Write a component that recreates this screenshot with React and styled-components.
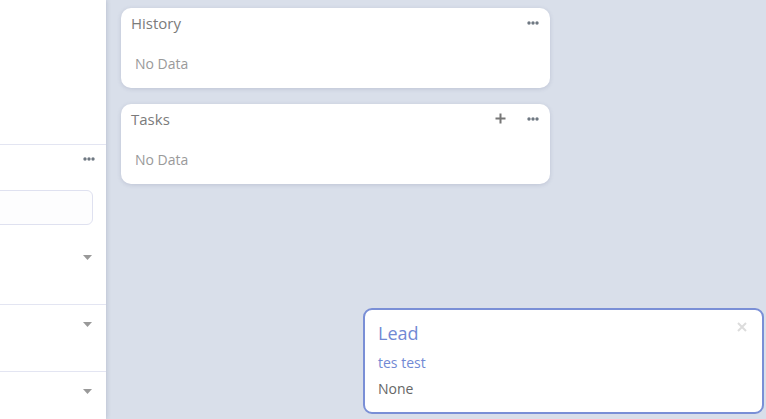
import React from "react";
import styled, { createGlobalStyle } from "styled-components";

const GlobalStyle = createGlobalStyle`
  html, body {
    margin: 0;
    padding: 0;
    height: 100%;
    overflow: hidden;
  }
  body {
    font-family: "Open Sans", "Liberation Sans", sans-serif;
    background: #d9dfea;
  }
  #root {
    height: 100%;
  }
`;

function Dots() {
  return (
    <svg width="12" height="4" viewBox="0 0 12 4">
      <circle cx="2" cy="2" r="1.7" fill="#6f7882" />
      <circle cx="6" cy="2" r="1.7" fill="#6f7882" />
      <circle cx="10" cy="2" r="1.7" fill="#6f7882" />
    </svg>
  );
}

function Plus() {
  return (
    <svg width="11" height="11" viewBox="0 0 11 11">
      <path d="M5.5 0.5v10M0.5 5.5h10" stroke="#777" strokeWidth="2" />
    </svg>
  );
}

function Caret() {
  return (
    <svg width="9" height="5" viewBox="0 0 9 5">
      <path d="M0 0h9L4.5 5z" fill="#999" />
    </svg>
  );
}

function Close() {
  return (
    <svg width="10" height="10" viewBox="0 0 10 10">
      <path d="M1 1l8 8M9 1l-8 8" stroke="#dcdcdc" strokeWidth="2" />
    </svg>
  );
}

export default function App() {
  return (
    <>
      <GlobalStyle />
      <Page>
        <Sidebar>
          <SideTop />
          <SideHeader>
            <Dots />
          </SideHeader>
          <SearchBox />
          <SelectRow $first>
            <Caret />
          </SelectRow>
          <SelectRow>
            <Caret />
          </SelectRow>
          <SelectRow>
            <Caret />
          </SelectRow>
        </Sidebar>
        <Main>
          <Card>
            <CardHead>
              <CardTitle>History</CardTitle>
              <Actions>
                <Dots />
              </Actions>
            </CardHead>
            <Empty>No Data</Empty>
          </Card>
          <Card>
            <CardHead>
              <CardTitle>Tasks</CardTitle>
              <Actions>
                <Plus />
                <Dots />
              </Actions>
            </CardHead>
            <Empty>No Data</Empty>
          </Card>
        </Main>
        <Toast>
          <CloseBtn>
            <Close />
          </CloseBtn>
          <ToastTitle>Lead</ToastTitle>
          <ToastLink>tes test</ToastLink>
          <ToastText>None</ToastText>
        </Toast>
      </Page>
    </>
  );
}

const Page = styled.div`
  position: relative;
  display: flex;
  height: 100%;
`;

const Sidebar = styled.div`
  width: 106px;
  flex-shrink: 0;
  background: #fff;
  box-shadow: 1px 0 4px rgba(60, 70, 110, 0.18);
  display: flex;
  flex-direction: column;
  overflow: hidden;
  z-index: 1;

  & > * {
    flex-shrink: 0;
  }
`;

const SideTop = styled.div`
  height: 144px;
  border-bottom: 1px solid #e3e5f2;
`;

const SideHeader = styled.div`
  height: 28px;
  display: flex;
  justify-content: flex-end;
  align-items: center;
  padding-right: 11px;
`;

const SearchBox = styled.div`
  margin: 17px 13px 0 -10px;
  height: 33px;
  border: 1px solid #dfe1f0;
  border-radius: 6px;
  background: #fdfdfe;
`;

const SelectRow = styled.div`
  height: ${({ $first }) => ($first ? "80px" : "67px")};
  border-bottom: 1px solid #e3e5f2;
  display: flex;
  justify-content: flex-end;
  align-items: flex-start;
  padding: ${({ $first }) => ($first ? "30px" : "17px")} 14px 0 0;
  box-sizing: border-box;
`;

const Main = styled.div`
  flex: 1;
  padding: 8px 15px;
  display: flex;
  flex-direction: column;
  gap: 16px;
`;

const Card = styled.div`
  width: 429px;
  height: 80px;
  box-sizing: border-box;
  background: #fff;
  border-radius: 10px;
  box-shadow: 0 1px 4px rgba(70, 80, 120, 0.18);
  padding: 5px 11px 0 10px;
`;

const CardHead = styled.div`
  display: flex;
  justify-content: space-between;
  align-items: center;
  height: 20px;
`;

const CardTitle = styled.div`
  font-size: 15px;
  color: #7b7b7b;
`;

const Actions = styled.div`
  display: flex;
  align-items: center;
  gap: 21px;
  margin-top: -1px;
`;

const Empty = styled.div`
  margin: 21px 0 0 4px;
  font-size: 14px;
  color: #9a9a9a;
`;

const Toast = styled.div`
  position: absolute;
  left: 363px;
  top: 308px;
  width: 401px;
  height: 106px;
  box-sizing: border-box;
  background: #fff;
  border: 2px solid #7a8fd6;
  border-radius: 9px;
  padding: 10px 14px 10px 13px;
  display: flex;
  flex-direction: column;
`;

const CloseBtn = styled.div`
  position: absolute;
  top: 12px;
  right: 15px;
  line-height: 0;
`;

const ToastTitle = styled.div`
  font-size: 18px;
  color: #7189d4;
  line-height: 26px;
`;

const ToastLink = styled.div`
  font-size: 14px;
  color: #7189d4;
  margin-top: 7px;
  line-height: 20px;
`;

const ToastText = styled.div`
  font-size: 14px;
  color: #666;
  margin-top: 6px;
  line-height: 20px;
`;
